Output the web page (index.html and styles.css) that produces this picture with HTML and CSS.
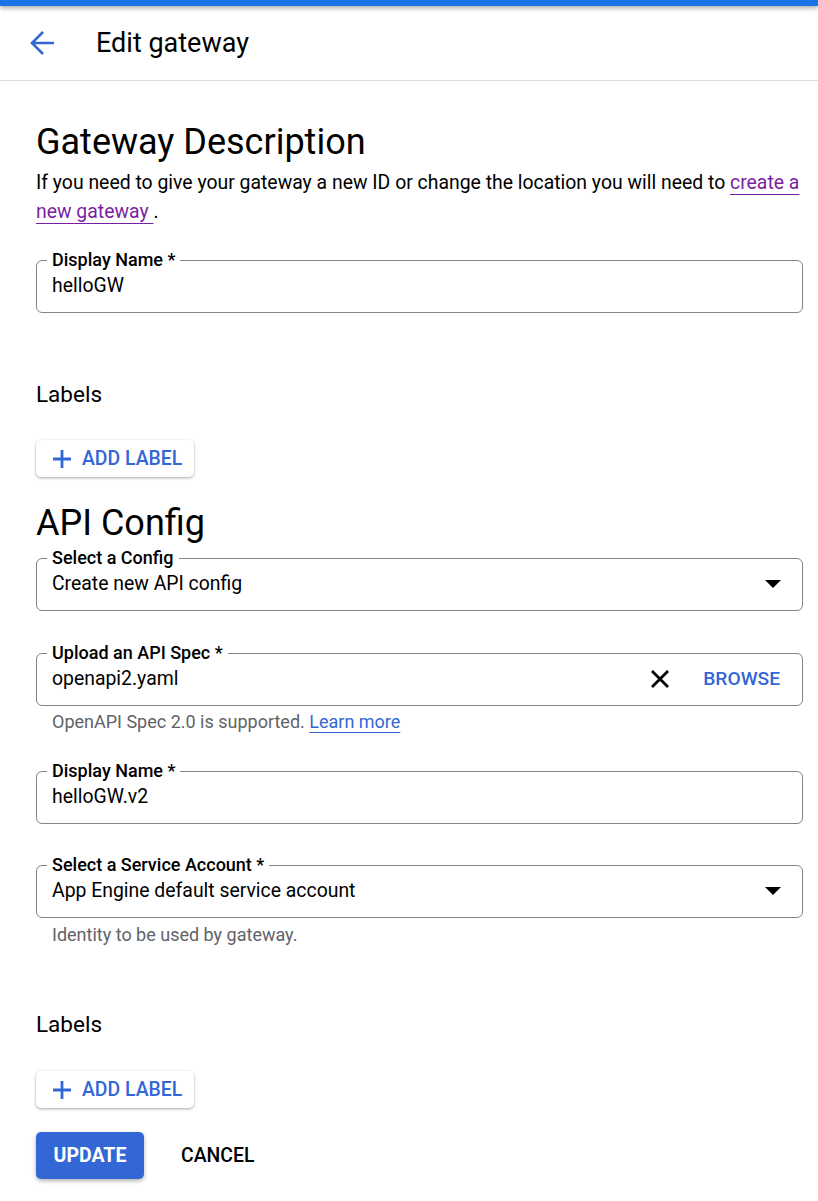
FILE: index.html
```html
<!DOCTYPE html>
<html>
<head>
<meta charset="utf-8">
<link rel="stylesheet" href="styles.css">
</head>
<body>
<div class="topbar"></div>
<header class="header">
  <svg class="back" width="26" height="26" viewBox="0 0 26 26"><path d="M25 13H3M14 2L3 13l11 11" fill="none" stroke="#3367d6" stroke-width="2.6"/></svg>
  <span class="title">Edit gateway</span>
</header>
<main class="main">
  <h1 class="h1">Gateway Description</h1>
  <p class="desc">If you need to give your gateway a new ID or change the location you will need to <a class="link" href="#">create a new gateway </a>.</p>

  <fieldset class="field f-first">
    <legend class="legend">Display Name *</legend>
    <div class="value">helloGW</div>
  </fieldset>

  <div class="labels l-first">Labels</div>
  <button class="addbtn a-first"><svg width="20" height="20" viewBox="0 0 20 20"><path d="M10 1v18M1 10h18" stroke="#3367d6" stroke-width="2.8"/></svg><span>ADD LABEL</span></button>

  <h2 class="h2">API Config</h2>
  <fieldset class="field f-select">
    <legend class="legend">Select a Config</legend>
    <div class="value row"><span class="grow">Create new API config</span><svg class="caret" width="16" height="8" viewBox="0 0 16 8"><path d="M0 0h16L8 8z" fill="#000"/></svg></div>
  </fieldset>

  <fieldset class="field f-upload">
    <legend class="legend">Upload an API Spec *</legend>
    <div class="value row"><span class="grow">openapi2.yaml</span><svg class="close" width="20" height="18" viewBox="0 0 20 18"><path d="M2 1l16 16M18 1L2 17" stroke="#000" stroke-width="2.8"/></svg><span class="browse">BROWSE</span></div>
  </fieldset>
  <div class="helper h-first">OpenAPI Spec 2.0 is supported. <a class="learn" href="#">Learn more</a></div>

  <fieldset class="field f-name2">
    <legend class="legend">Display Name *</legend>
    <div class="value">helloGW.v2</div>
  </fieldset>

  <fieldset class="field f-sa">
    <legend class="legend">Select a Service Account *</legend>
    <div class="value row"><span class="grow">App Engine default service account</span><svg class="caret" width="16" height="8" viewBox="0 0 16 8"><path d="M0 0h16L8 8z" fill="#000"/></svg></div>
  </fieldset>
  <div class="helper h-second">Identity to be used by gateway.</div>

  <div class="labels l-second">Labels</div>
  <button class="addbtn a-second"><svg width="20" height="20" viewBox="0 0 20 20"><path d="M10 1v18M1 10h18" stroke="#3367d6" stroke-width="2.8"/></svg><span>ADD LABEL</span></button>

  <div class="actions">
    <button class="update">UPDATE</button>
    <button class="cancel">CANCEL</button>
  </div>
</main>
</body>
</html>
```
FILE: styles.css
```css
* { box-sizing: border-box; }
html, body { margin: 0; padding: 0; background: #fff; }
body { font-family: Roboto, "Liberation Sans", sans-serif; color: #000; width: 818px; height: 1201px; overflow: hidden; }

.topbar { height: 6px; background: #1a73e8; box-shadow: 0 2px 5px rgba(0,0,0,.35); position: relative; z-index: 1; }
.header { height: 75px; display: flex; align-items: center; border-bottom: 1px solid #dadce0; padding-left: 29px; }
.back { display: block; margin-top: -1px; }
.title { font-size: 27px; margin-left: 41px; line-height: 32px; }

.main { padding: 0 15px 0 36px; }
.h1 { font-size: 36px; font-weight: 400; line-height: 42px; margin: 40px 0 0; }
.desc { font-size: 19.4px; line-height: 29px; margin: 5px 0 0; }
.link { color: #7b1fa2; text-decoration: underline; text-underline-offset: 5px; text-decoration-thickness: 1px; }

.field { margin: 0; padding: 0 15px 12px; border: 1px solid #80868b; border-radius: 6px; min-width: 0; }
.legend { font-size: 18px; font-weight: 500; line-height: 22px; padding: 0 5px; margin-left: -5px; }
.value { font-size: 19.4px; line-height: 28px; height: 28px; margin-top: 1px; }
.row { display: flex; align-items: center; }
.grow { flex: 1; }
.caret { margin-right: 6px; }
.close { margin-right: 33px; }
.browse { color: #3367d6; font-weight: 500; font-size: 19.2px; margin-right: 7px; }

.f-first { margin-top: 23px; }
.labels { font-size: 22.5px; line-height: 28px; }
.l-first { margin-top: 67px; }
.l-second { margin-top: 64px; }

.addbtn { display: flex; align-items: center; gap: 10px; height: 37px; padding: 0 12px 0 16px; border: 0; border-radius: 5px; background: #fff; box-shadow: 0 1px 3px rgba(0,0,0,.35); font-family: inherit; font-size: 19.4px; font-weight: 500; color: #3367d6; cursor: pointer; }
.addbtn svg { display: block; }
.a-first { margin-top: 32px; }
.a-second { margin-top: 33px; }

.h2 { font-size: 36px; font-weight: 400; line-height: 42px; margin: 25px 0 0; }
.f-select { margin-top: 3px; }
.f-upload { margin-top: 31px; }
.helper { font-size: 18px; line-height: 22px; color: #5f6368; padding-left: 16px; }
.h-first { margin-top: 5px; }
.h-second { margin-top: 6px; }
.learn { color: #3367d6; text-decoration: underline; text-underline-offset: 4px; text-decoration-thickness: 1px; }
.f-name2 { margin-top: 27px; }
.f-sa { margin-top: 30px; }

.actions { display: flex; align-items: center; margin-top: 24px; }
.update { height: 47px; width: 108px; border: 0; border-radius: 5px; background: #3367d6; color: #fff; font-family: inherit; font-size: 19.5px; font-weight: 700; box-shadow: 0 2px 4px rgba(0,0,0,.3); padding: 0; }
.cancel { margin-left: 22px; border: 0; background: none; font-family: inherit; font-size: 19.4px; font-weight: 500; color: #000; padding: 0 15px; height: 47px; }
```
